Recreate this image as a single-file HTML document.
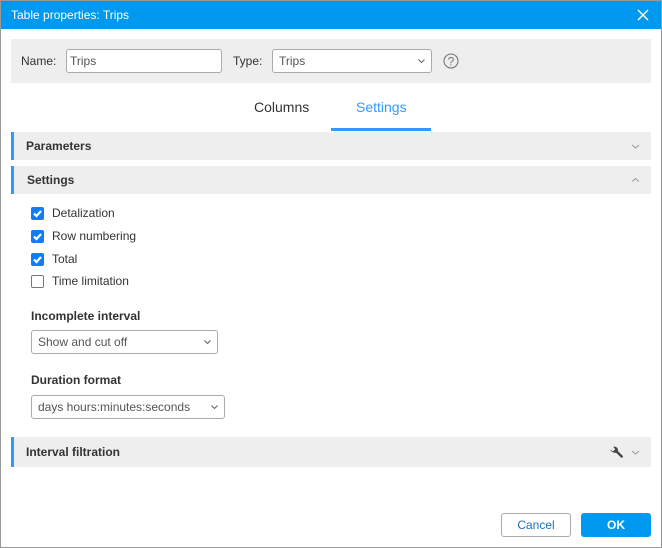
<!DOCTYPE html>
<html><head><meta charset="utf-8">
<style>
html,body{margin:0;padding:0;background:#fff}
body{width:662px;height:548px;position:relative;overflow:hidden;font-family:"Liberation Sans",Arial,sans-serif;font-size:12px;color:#333}
.a{position:absolute;white-space:nowrap}
.box{position:absolute;box-sizing:border-box;border:1px solid #aaa;border-radius:3px;background:#fff;color:#555;padding-left:6px}
.sec{position:absolute;left:11px;width:640px;background:#eee;box-sizing:border-box;border-left:3px solid #3399ff}
.h{font-weight:bold;color:#333}
.cb{position:absolute;left:31px;width:13px;height:13px;border-radius:2px;background:#0d7dfb}
svg{position:absolute;overflow:visible}
</style></head><body>
<div class="a" style="left:0;top:0;width:662px;height:548px;box-sizing:border-box;border:1px solid #999"></div>
<div class="a" style="left:1px;top:1px;width:660px;height:28px;background:#0099f0"></div>
<div class="a" style="left:11px;top:8px;line-height:14px;color:#fff">Table properties: Trips</div>
<svg style="left:0;top:0" width="662" height="548" fill="none">
<path d="M638 10l10 10M648 10l-10 10" stroke="#fff" stroke-width="1.500"/>
</svg>
<div class="a" style="left:11px;top:39px;width:640px;height:44px;background:#eee"></div>
<div class="a" style="left:21px;top:54px;line-height:14px">Name:</div>
<div class="box" style="left:66px;top:49px;width:156px;height:24px;line-height:22px;padding-left:3px">Trips</div>
<div class="a" style="left:233px;top:54px;line-height:14px">Type:</div>
<div class="box" style="left:272px;top:49px;width:160px;height:24px;line-height:22px">Trips</div>
<svg style="left:0;top:0;z-index:2" width="662" height="548" fill="none">
<path d="M418.500 59.500l3 3 3-3" stroke="#666" stroke-width="1.100"/>
<circle cx="451" cy="61" r="7" stroke="#777" stroke-width="1.100"/>
<text x="451" y="65.500" font-size="12" text-anchor="middle" fill="#777" font-family="Liberation Sans">?</text>
</svg>
<div class="a" style="left:254px;top:99px;font-size:14px;line-height:16px;color:#333">Columns</div>
<div class="a" style="left:356px;top:99px;font-size:14px;line-height:16px;color:#3399ff">Settings</div>
<div class="a" style="left:331px;top:128px;width:100px;height:3px;background:#3399ff"></div>

<div class="sec" style="top:132px;height:28px"></div>
<div class="a h" style="left:26px;top:139px;line-height:14px">Parameters</div>
<div class="sec" style="top:166px;height:28px"></div>
<div class="a h" style="left:27px;top:173px;line-height:14px">Settings</div>
<svg style="left:0;top:0;z-index:2" width="662" height="548" fill="none">
<path d="M632 145l3.500 3 3.500-3" stroke="#999"/>
<path d="M632 181.500l3.500-3 3.500 3" stroke="#999"/>
<path d="M632 451l3.500 3 3.500-3" stroke="#999"/>
<path d="M610.500 449.500l2.500 2 2.200-2.200-2-2.500c2.700-.8 5.300 1.200 4.700 4.200l4.600 4.600c.6.600.6 1.300.1 1.800s-1.200.5-1.800-.1l-4.600-4.600c-3 .6-5.500-1.500-5.700-3.200z" fill="#444"/>
</svg>

<div class="cb" style="top:207px"></div>
<div class="cb" style="top:230px"></div>
<div class="cb" style="top:253px"></div>
<div class="a" style="left:31px;top:275px;width:13px;height:13px;box-sizing:border-box;border:1px solid #777;border-radius:2px;background:#fff"></div>
<svg style="left:0;top:0;z-index:2" width="662" height="548" fill="none" stroke="#fff" stroke-width="2.200">
<path d="M34 213.500l2.500 2.500 4.500-5"/>
<path d="M34 236.500l2.500 2.500 4.500-5"/>
<path d="M34 259.500l2.500 2.500 4.500-5"/>
</svg>
<div class="a" style="left:52px;top:206px;line-height:14px">Detalization</div>
<div class="a" style="left:52px;top:229px;line-height:14px">Row numbering</div>
<div class="a" style="left:52px;top:252px;line-height:14px">Total</div>
<div class="a" style="left:52px;top:274px;line-height:14px">Time limitation</div>

<div class="a h" style="left:31px;top:309px;line-height:14px">Incomplete interval</div>
<div class="box" style="left:31px;top:330px;width:187px;height:24px;line-height:22px">Show and cut off</div>
<div class="a h" style="left:31px;top:373px;line-height:14px">Duration format</div>
<div class="box" style="left:31px;top:395px;width:194px;height:24px;line-height:22px">days hours:minutes:seconds</div>
<svg style="left:0;top:0;z-index:2" width="662" height="548" fill="none">
<path d="M204.500 340.500l3 3 3-3" stroke="#666" stroke-width="1.100"/>
<path d="M211.500 405.500l3 3 3-3" stroke="#666" stroke-width="1.100"/>
</svg>

<div class="sec" style="top:437px;height:30px"></div>
<div class="a h" style="left:26px;top:445px;line-height:14px">Interval filtration</div>

<div class="a" style="left:501px;top:513px;width:70px;height:24px;box-sizing:border-box;border:1px solid #aaa;border-radius:3px;background:#fff;color:#1a6fc0;text-align:center;line-height:22px">Cancel</div>
<div class="a" style="left:581px;top:513px;width:70px;height:24px;border-radius:3px;background:#0099f0;color:#fff;text-align:center;line-height:24px;font-weight:bold">OK</div>
</body></html>
